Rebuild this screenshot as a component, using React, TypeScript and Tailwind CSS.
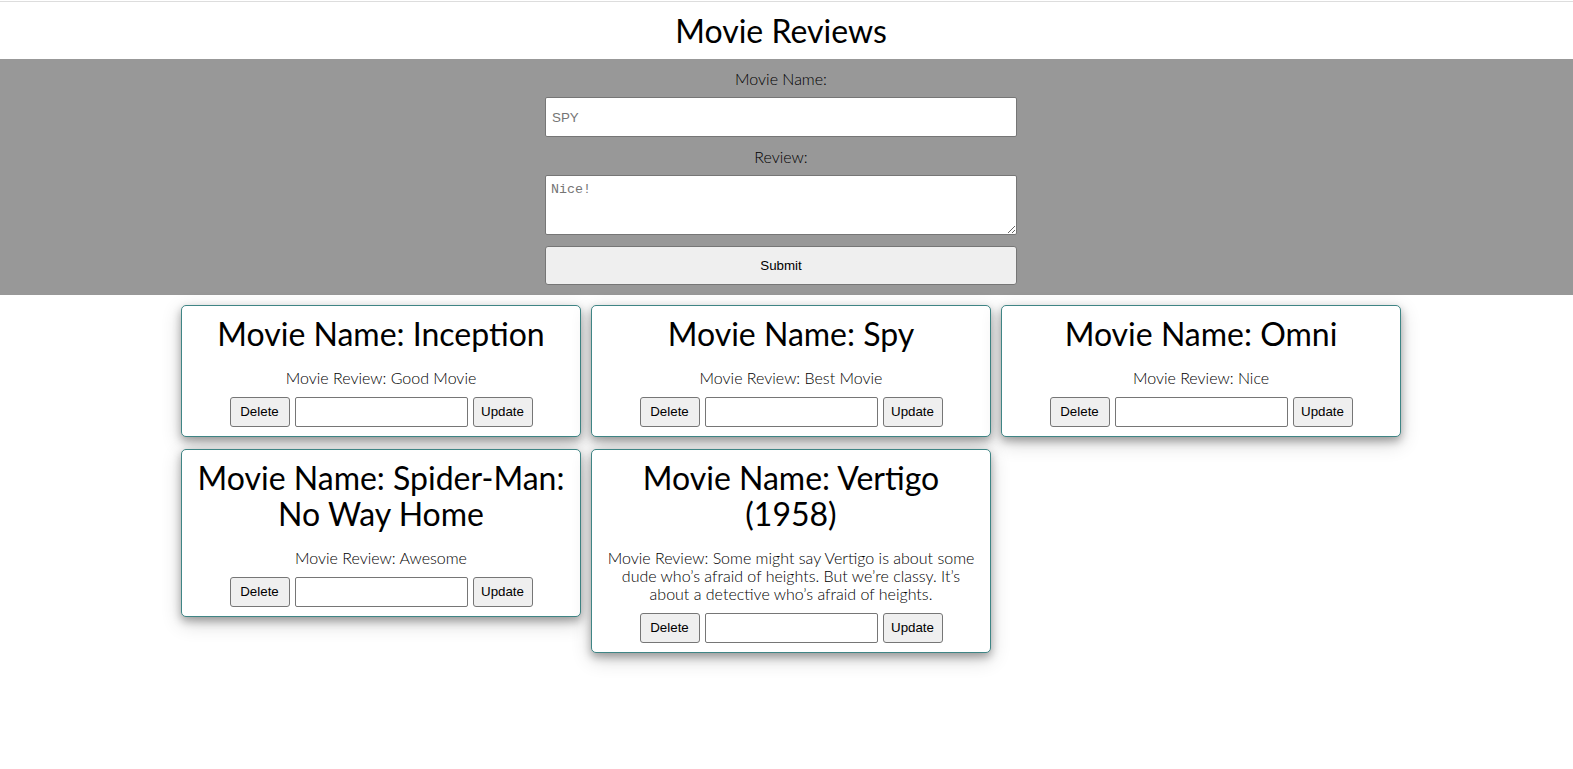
import React from "react";

const movies = [
  { name: "Inception", review: "Good Movie" },
  { name: "Spy", review: "Best Movie" },
  { name: "Omni", review: "Nice" },
  { name: "Spider-Man: No Way Home", review: "Awesome" },
  {
    name: "Vertigo (1958)",
    review:
      "Some might say Vertigo is about some dude who’s afraid of heights. But we’re classy. It’s about a detective who’s afraid of heights.",
  },
];

const ui = "font-['Liberation_Sans',Arial,sans-serif]";

function Card({ name, review }: { name: string; review: string }) {
  return (
    <div className="rounded-[5px] border border-[#3f8585] bg-white px-[10px] pt-[10px] pb-[9px] text-center shadow-[0_4px_8px_0_rgba(0,0,0,0.3),0_6px_20px_0_rgba(0,0,0,0.19)]">
      <h2 className="text-[32px] leading-[36px] font-normal text-black">Movie Name: {name}</h2>
      <p className="mt-[17px] text-[16px] leading-[18px] font-light text-black">Movie Review: {review}</p>
      <div className="mt-[10px] flex justify-center gap-[5px]">
        <button className={`${ui} h-[30px] w-[60px] rounded-[3px] border border-[#767676] bg-[#efefef] text-[13.33px] text-black`}>Delete</button>
        <input className={`${ui} h-[30px] w-[173px] rounded-[2px] border border-[#767676] bg-white px-[2px] text-[13.33px]`} />
        <button className={`${ui} h-[30px] w-[60px] rounded-[3px] border border-[#767676] bg-[#efefef] text-[13.33px] text-black`}>Update</button>
      </div>
    </div>
  );
}

export default function App() {
  return (
    <div className="min-h-screen bg-white font-['Lato','Noto_Sans',sans-serif] text-black">
      <div className="h-[1px] bg-white" />
      <div className="h-[1px] bg-[#dddddd]" />
      <div className="ml-[545px] flex h-[57px] w-[472px] items-center justify-center">
        <h1 className="text-[32px] font-normal leading-none">Movie Reviews</h1>
      </div>
      <div className="bg-[#989898] pt-[10px] pb-[10px]">
        <div className="ml-[545px] flex w-[472px] flex-col">
          <label className="text-center text-[16px] leading-[19px] font-light text-black">Movie Name:</label>
          <input
            className={`${ui} mt-[9px] h-[40px] w-full rounded-[2px] border border-[#767676] bg-white px-[6px] text-[13.33px] placeholder:text-[#757575]`}
            placeholder="SPY"
          />
          <label className="mt-[10px] text-center text-[16px] leading-[19px] font-light text-black">Review:</label>
          <textarea
            className="mt-[9px] h-[60px] w-full rounded-[2px] border border-[#767676] bg-white pt-[4px] pl-[5px] pr-[2px] pb-[2px] font-['Liberation_Mono','DejaVu_Sans_Mono',monospace] text-[13.33px] placeholder:text-[#757575]"
            placeholder="Nice!"
          />
          <button className={`${ui} mt-[11px] h-[39px] w-full rounded-[3px] border border-[#767676] bg-[#efefef] text-[13.33px] text-black`}>
            Submit
          </button>
        </div>
      </div>
      <div className="mt-[10px] ml-[181px] grid w-[1220px] grid-cols-3 items-start gap-x-[10px] gap-y-[12px]">
        {movies.map((m) => (
          <Card key={m.name} name={m.name} review={m.review} />
        ))}
      </div>
    </div>
  );
}
